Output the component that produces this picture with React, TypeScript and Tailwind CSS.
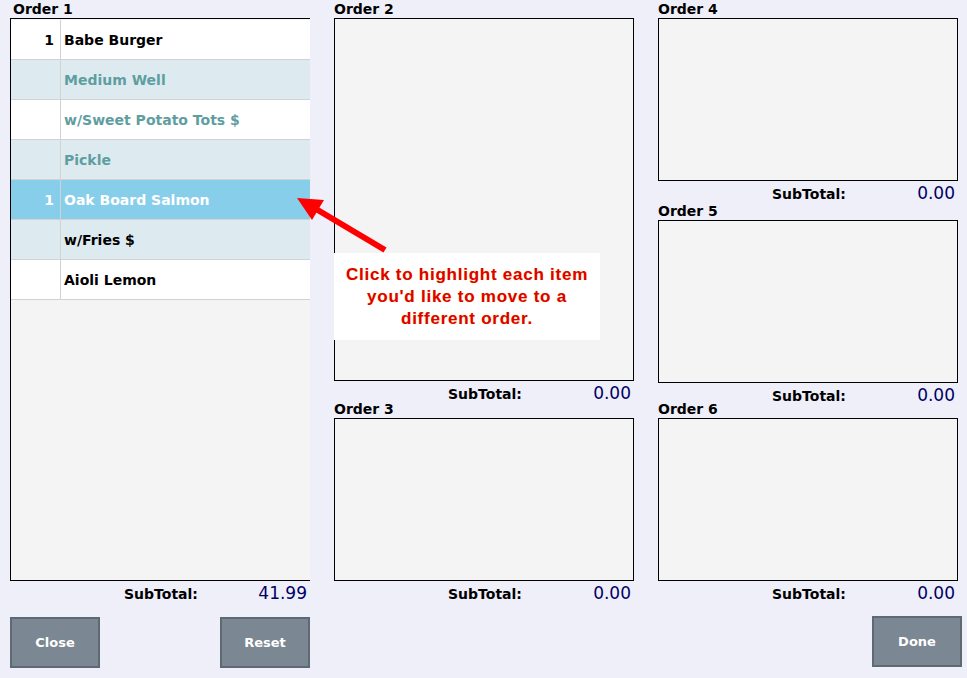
import React from "react";

type Line = { qty?: string; name: string; kind: "item" | "mod" | "sel" | "sub" };

const lines: Line[] = [
  { qty: "1", name: "Babe Burger", kind: "item" },
  { name: "Medium Well", kind: "mod" },
  { name: "w/Sweet Potato Tots $", kind: "mod" },
  { name: "Pickle", kind: "mod" },
  { qty: "1", name: "Oak Board Salmon", kind: "sel" },
  { name: "w/Fries $", kind: "sub" },
  { name: "Aioli Lemon", kind: "sub" },
];

const font = "font-['DejaVu_Sans',Verdana,sans-serif]";

// the subtotal line is 24px tall but may spill into the next label's space
const SubTotal = ({ value, h }: { value: string; h: string }) => (
  <div className={`${h} overflow-visible`}>
    <div className="flex h-[24px] items-center pt-[2px]">
      <span className="ml-[114px] text-[14px] font-bold text-black">SubTotal:</span>
      <span className="flex-1 pb-[1px] pr-[3px] text-right text-[17px] text-[#000066]">{value}</span>
    </div>
  </div>
);

const Label = ({ text, indent }: { text: string; indent?: boolean }) => (
  <div className={`relative flex h-[18px] items-center text-[14px] font-bold text-black ${indent ? "pl-[3px]" : ""}`}>
    {text}
  </div>
);

const Empty = ({ h }: { h: string }) => <div className={`${h} border border-black bg-[#f4f4f4]`} />;

const Button = ({ text }: { text: string }) => (
  <button className="h-[51px] w-[90px] border-2 border-[#5e6a73] bg-[#7b8792] text-[13px] font-bold text-white">
    {text}
  </button>
);

export default function App() {
  return (
    <div className={`relative h-[678px] w-[967px] overflow-hidden bg-[#efeff9] px-[10px] ${font}`}>
      <div className="grid grid-cols-[300px_300px_300px] gap-x-[24px]">
        {/* column 1 */}
        <div className="flex flex-col">
          <Label text="Order 1" indent />
          <div className="h-[563px] border-b border-l border-t border-black bg-[#f4f4f4] pt-[1px]">
            {lines.map((l, i) => {
              const bg =
                l.kind === "sel" ? "bg-[#87ceeb]" : i % 2 === 1 ? "bg-[#ddebf0]" : "bg-white";
              const color =
                l.kind === "sel" ? "text-white" : l.kind === "mod" ? "text-[#5f9ea0]" : "text-black";
              return (
                <div key={i} className={`flex h-[40px] border-b border-[#d2d2d2] ${bg} ${color} text-[14px] font-bold`}>
                  <div className="flex w-[50px] items-center justify-end border-r border-[#d2d2d2] pr-[6px] pt-[2px]">
                    {l.qty}
                  </div>
                  <div className="flex items-center pl-[3px] pt-[2px]">{l.name}</div>
                </div>
              );
            })}
          </div>
          <SubTotal value="41.99" h="h-[24px]" />
          <div className="mt-[12px] flex justify-between">
            <Button text="Close" />
            <Button text="Reset" />
          </div>
        </div>

        {/* column 2 */}
        <div className="flex flex-col">
          <Label text="Order 2" />
          <Empty h="h-[363px]" />
          <SubTotal value="0.00" h="h-[19px]" />
          <Label text="Order 3" />
          <Empty h="h-[163px]" />
          <SubTotal value="0.00" h="h-[24px]" />
        </div>

        {/* column 3 */}
        <div className="flex flex-col">
          <Label text="Order 4" />
          <Empty h="h-[163px]" />
          <SubTotal value="0.00" h="h-[21px]" />
          <Label text="Order 5" />
          <Empty h="h-[163px]" />
          <SubTotal value="0.00" h="h-[17px]" />
          <Label text="Order 6" />
          <Empty h="h-[163px]" />
          <SubTotal value="0.00" h="h-[24px]" />
          <div className="mr-[-4px] mt-[11px] flex justify-end">
            <Button text="Done" />
          </div>
        </div>
      </div>

      {/* hint overlay */}
      <div className="absolute left-[334px] top-[253px] flex h-[87px] w-[266px] flex-col items-center justify-center bg-white pt-[1px] text-center font-['Liberation_Sans',Arial,sans-serif] text-[17px] font-bold leading-[22px] tracking-[0.75px] text-[#e00000] [text-shadow:0_0_1px_#f5d76e]">
        <div>Click to highlight each item</div>
        <div>you'd like to move to a</div>
        <div>different order.</div>
      </div>
      <svg className="absolute left-0 top-0" width="967" height="678" viewBox="0 0 967 678">
        <line x1="385" y1="250" x2="316" y2="209" stroke="#ff0000" strokeWidth="6" />
        <polygon points="297,198 324,200 312,220" fill="#ff0000" />
      </svg>
    </div>
  );
}
